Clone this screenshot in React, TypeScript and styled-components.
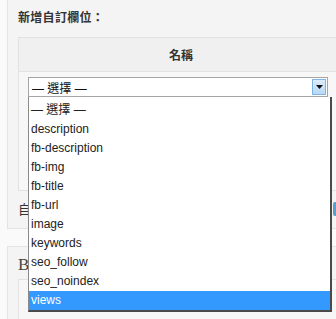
import React from 'react';
import styled, { createGlobalStyle } from 'styled-components';

const GlobalStyle = createGlobalStyle`
  html, body {
    margin: 0;
    padding: 0;
    background: #fafafa;
    overflow: hidden;
  }
  body {
    font-family: "Liberation Sans", Arial, "Noto Sans CJK TC", sans-serif;
    color: #333;
  }
`;

const options = [
  '— 選擇 —',
  'description',
  'fb-description',
  'fb-img',
  'fb-title',
  'fb-url',
  'image',
  'keywords',
  'seo_follow',
  'seo_noindex',
  'views',
];

const App: React.FC = () => {
  const selected = 'views';

  return (
    <>
      <GlobalStyle />
      <Page>
        <Panel>
          <Title>新增自訂欄位：</Title>
          <Table>
            <HeadCell>名稱</HeadCell>
            <BodyCell>
              <SelectWrap>
                <Select>
                  <SelectText>— 選擇 —</SelectText>
                  <ArrowButton>
                    <svg width="7" height="4" viewBox="0 0 7 4">
                      <path d="M0 0 L7 0 L3.5 4 Z" fill="#111" />
                    </svg>
                  </ArrowButton>
                </Select>
                <Dropdown>
                  {options.map(opt => (
                    <Option key={opt} active={opt === selected}>
                      {opt}
                    </Option>
                  ))}
                </Dropdown>
              </SelectWrap>
            </BodyCell>
          </Table>
          <FooterRow>
            <FooterText>自訂欄位說明</FooterText>
            <AddButton />
          </FooterRow>
        </Panel>

        <Panel second>
          <SerifTitle>Blog 設定</SerifTitle>
          <Table>
            <EmptyCell />
          </Table>
        </Panel>
      </Page>
    </>
  );
};

const Page = styled.div`
  width: 360px;
  padding-left: 7px;
  display: flex;
  flex-direction: column;
  gap: 17px;
`;

const Panel = styled.div<{ second?: boolean }>`
  background: #f4f4f4;
  border: 1px solid #e4e4e4;
  margin-top: ${p => (p.second ? '0' : '-1px')};
  padding: ${p => (p.second ? '8px 0 0 10px' : '9px 0 10px 10px')};
`;

const Title = styled.div`
  font-size: 12px;
  font-weight: bold;
  color: #333;
  height: 18px;
  line-height: 18px;
  margin-bottom: 10px;
  letter-spacing: 0.3px;
`;

const SerifTitle = styled.div`
  font-family: "Liberation Serif", "Times New Roman", "Noto Sans CJK TC", serif;
  font-size: 17px;
  color: #444;
  height: 24px;
  line-height: 20px;
`;

const Table = styled.div`
  width: 330px;
  background: #f7f7f7;
  border: 1px solid #e2e2e2;
  display: flex;
  flex-direction: column;
`;

const HeadCell = styled.div`
  height: 33px;
  background: #f0f0f0;
  border-bottom: 1px solid #e2e2e2;
  display: flex;
  align-items: center;
  justify-content: center;
  font-size: 12px;
  font-weight: bold;
  color: #333;
  padding-right: 6px;
`;

const BodyCell = styled.div`
  height: 113px;
  padding: 5px 0 0 9px;
`;

const EmptyCell = styled.div`
  height: 40px;
`;

const SelectWrap = styled.div`
  position: relative;
  width: 300px;
`;

const Select = styled.div`
  height: 18px;
  background: #fff;
  border: 1px solid #a5a5a5;
  display: flex;
  align-items: center;
  justify-content: space-between;
`;

const SelectText = styled.span`
  font-size: 12px;
  color: #111;
  padding-left: 3px;
`;

const ArrowButton = styled.span`
  width: 14px;
  height: 16px;
  margin-right: 1px;
  background: linear-gradient(#dcecfc, #b9d8f4);
  border: 1px solid #7eb4ea;
  box-sizing: border-box;
  display: flex;
  align-items: center;
  justify-content: center;
`;

const Dropdown = styled.div`
  position: absolute;
  top: 20px;
  left: 0;
  width: 301px;
  background: #fff;
  border: 1px solid #8a8a8a;
  border-top: none;
  border-right: 2px solid #4a4a4a;
  border-bottom: 2px solid #4a4a4a;
  padding-top: 4px;
  z-index: 10;
`;

const Option = styled.div<{ active?: boolean }>`
  height: 19px;
  line-height: 19px;
  padding-left: 2px;
  font-size: 12px;
  color: ${p => (p.active ? '#fff' : '#222')};
  background: ${p => (p.active ? '#3399ff' : 'transparent')};
`;

const FooterRow = styled.div`
  display: flex;
  align-items: center;
  justify-content: space-between;
  margin-top: 8px;
  width: 333px;
`;

const FooterText = styled.span`
  font-size: 13px;
  color: #333;
`;

const AddButton = styled.span`
  width: 18px;
  height: 14px;
  background: #5b9ec9;
  border-radius: 2px;
`;

export default App;
